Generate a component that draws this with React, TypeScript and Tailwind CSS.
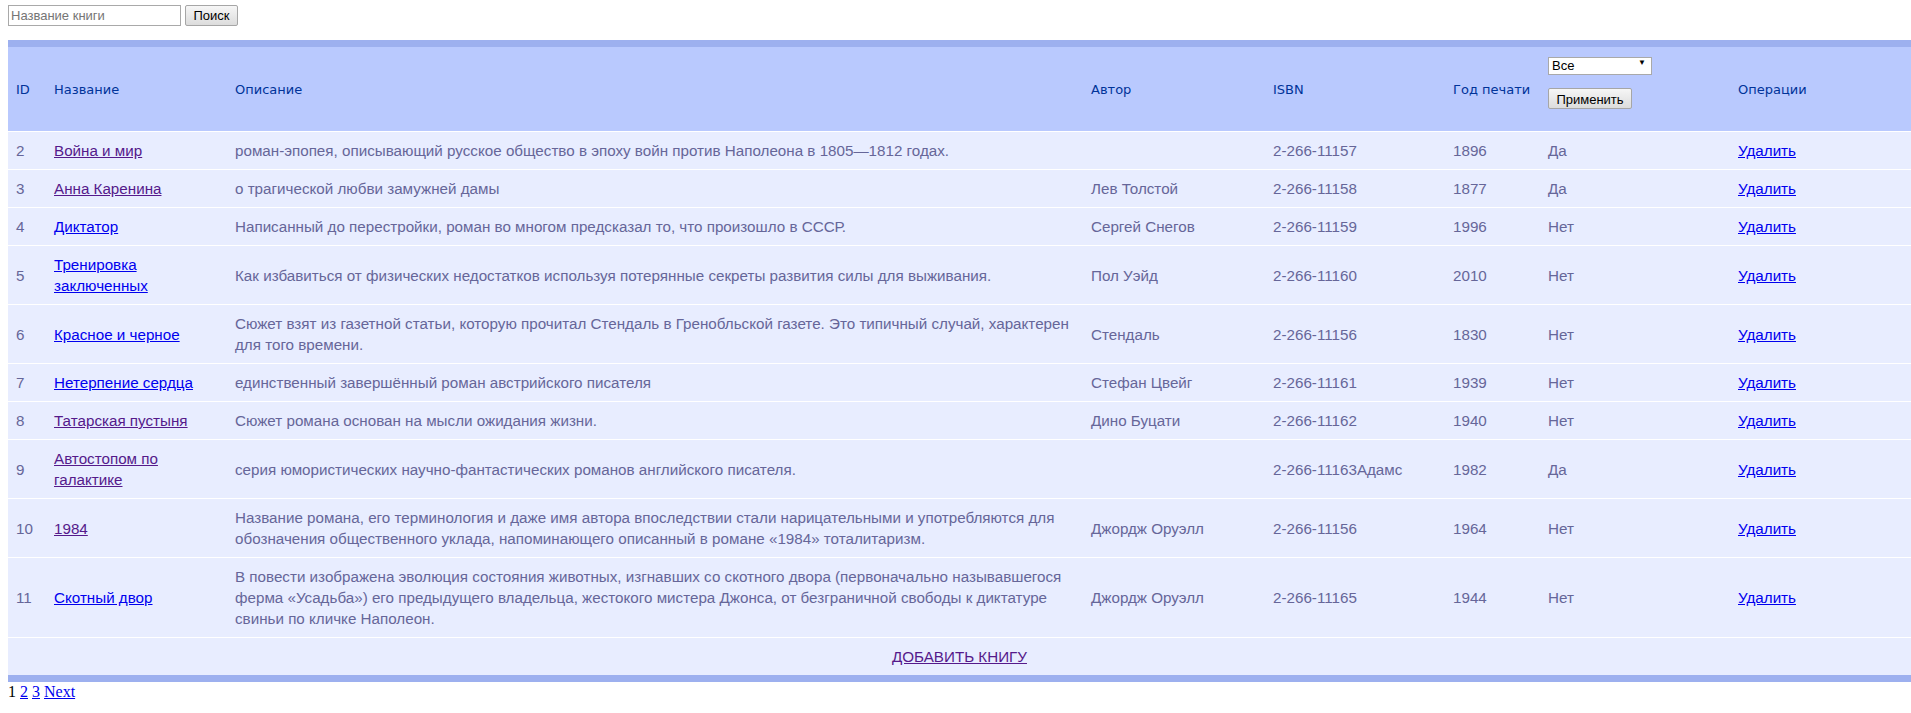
import React from "react";

type Book = {
  id: number;
  title: string;
  visited: boolean;
  description: string;
  author: string;
  isbn: string;
  year: string;
  read: string;
};

const books: Book[] = [
  {
    id: 2,
    title: "Война и мир",
    visited: true,
    description:
      "роман-эпопея, описывающий русское общество в эпоху войн против Наполеона в 1805—1812 годах.",
    author: "",
    isbn: "2-266-11157",
    year: "1896",
    read: "Да",
  },
  {
    id: 3,
    title: "Анна Каренина",
    visited: true,
    description: "о трагической любви замужней дамы",
    author: "Лев Толстой",
    isbn: "2-266-11158",
    year: "1877",
    read: "Да",
  },
  {
    id: 4,
    title: "Диктатор",
    visited: false,
    description:
      "Написанный до перестройки, роман во многом предсказал то, что произошло в СССР.",
    author: "Сергей Снегов",
    isbn: "2-266-11159",
    year: "1996",
    read: "Нет",
  },
  {
    id: 5,
    title: "Тренировка заключенных",
    visited: false,
    description:
      "Как избавиться от физических недостатков используя потерянные секреты развития силы для выживания.",
    author: "Пол Уэйд",
    isbn: "2-266-11160",
    year: "2010",
    read: "Нет",
  },
  {
    id: 6,
    title: "Красное и черное",
    visited: false,
    description:
      "Сюжет взят из газетной статьи, которую прочитал Стендаль в Гренобльской газете. Это типичный случай, характерен для того времени.",
    author: "Стендаль",
    isbn: "2-266-11156",
    year: "1830",
    read: "Нет",
  },
  {
    id: 7,
    title: "Нетерпение сердца",
    visited: false,
    description: "единственный завершённый роман австрийского писателя",
    author: "Стефан Цвейг",
    isbn: "2-266-11161",
    year: "1939",
    read: "Нет",
  },
  {
    id: 8,
    title: "Татарская пустыня",
    visited: true,
    description: "Сюжет романа основан на мысли ожидания жизни.",
    author: "Дино Буцати",
    isbn: "2-266-11162",
    year: "1940",
    read: "Нет",
  },
  {
    id: 9,
    title: "Автостопом по галактике",
    visited: true,
    description:
      "серия юмористических научно-фантастических романов английского писателя.",
    author: "",
    isbn: "2-266-11163Адамс",
    year: "1982",
    read: "Да",
  },
  {
    id: 10,
    title: "1984",
    visited: true,
    description:
      "Название романа, его терминология и даже имя автора впоследствии стали нарицательными и употребляются для обозначения общественного уклада, напоминающего описанный в романе «1984» тоталитаризм.",
    author: "Джордж Оруэлл",
    isbn: "2-266-11156",
    year: "1964",
    read: "Нет",
  },
  {
    id: 11,
    title: "Скотный двор",
    visited: false,
    description:
      "В повести изображена эволюция состояния животных, изгнавших со скотного двора (первоначально называвшегося ферма «Усадьба») его предыдущего владельца, жестокого мистера Джонса, от безграничной свободы к диктатуре свиньи по кличке Наполеон.",
    author: "Джордж Оруэлл",
    isbn: "2-266-11165",
    year: "1944",
    read: "Нет",
  },
];

const td =
  "px-2 py-[8px] border-b border-b-white align-middle text-[#666699]";
const th =
  "px-2 py-2 border-t-[7px] border-t-[#9db0ef] border-b border-b-white bg-[#b9c9fe] text-left font-normal text-[#003399] text-[13px] align-middle";

export default function App() {
  return (
    <div className="min-h-screen bg-white">
      <form className="flex items-center gap-1 pl-2 pt-[5px]">
        <input
          type="text"
          placeholder="Название книги"
          className="h-[21px] w-[173px] border border-[#a9a9a9] bg-white px-[2px] text-[13px] font-['Liberation_Sans',Arial,sans-serif] text-black placeholder:text-[#757575] outline-none"
        />
        <button
          type="button"
          className="h-[21px] w-[53px] rounded-[2px] border border-[#a6a6a6] bg-gradient-to-b from-[#f6f6f6] to-[#dcdcdc] text-[13px] font-['Liberation_Sans',Arial,sans-serif] text-black"
        >
          Поиск
        </button>
      </form>

      <table className="ml-2 mt-[14px] w-[1903px] table-fixed border-collapse border-b-[7px] border-b-[#9db0ef] text-left font-['Liberation_Sans',Arial,sans-serif] text-[15.2px] leading-[21px]">
        <colgroup>
          <col className="w-[38px]" />
          <col className="w-[181px]" />
          <col className="w-[856px]" />
          <col className="w-[182px]" />
          <col className="w-[180px]" />
          <col className="w-[95px]" />
          <col className="w-[190px]" />
          <col className="w-[181px]" />
        </colgroup>
        <thead className="font-['DejaVu_Sans',Verdana,sans-serif]">
          <tr>
            <th className={th}>ID</th>
            <th className={th}>Название</th>
            <th className={th}>Описание</th>
            <th className={th}>Автор</th>
            <th className={th}>ISBN</th>
            <th className={th}>Год печати</th>
            <th className={th}>
              <div className="flex flex-col items-start pb-[14px] font-['Liberation_Sans',Arial,sans-serif]">
                <div className="relative h-[18px] w-[104px]">
                  <select className="h-[18px] w-[104px] appearance-none border border-[#a9a9a9] bg-white pl-[3px] text-[13px] leading-[16px] text-black outline-none">
                    <option>Все</option>
                    <option>Да</option>
                    <option>Нет</option>
                  </select>
                  <span className="pointer-events-none absolute right-[6px] top-[4px] text-[8px] leading-[8px] text-black">
                    ▼
                  </span>
                </div>
                <button
                  type="button"
                  className="mt-[15px] h-[21px] w-[84px] rounded-[2px] border border-[#a6a6a6] bg-gradient-to-b from-[#f6f6f6] to-[#dcdcdc] text-[13px] text-black"
                >
                  Применить
                </button>
              </div>
            </th>
            <th className={th}>Операции</th>
          </tr>
        </thead>
        <tbody className="bg-[#e8edff]">
          {books.map((b) => (
            <tr key={b.id}>
              <td className={td}>{b.id}</td>
              <td className={td}>
                <a
                  href="#"
                  className={
                    b.visited
                      ? "text-[#551a8b] underline"
                      : "text-[#0000ee] underline"
                  }
                >
                  {b.title}
                </a>
              </td>
              <td className={td}>{b.description}</td>
              <td className={td}>{b.author}</td>
              <td className={td}>{b.isbn}</td>
              <td className={td}>{b.year}</td>
              <td className={td}>{b.read}</td>
              <td className={td}>
                <a href="#" className="text-[#0000ee] underline">
                  Удалить
                </a>
              </td>
            </tr>
          ))}
          <tr>
            <td colSpan={8} className={td + " text-center"}>
              <a href="#" className="text-[#551a8b] underline">
                ДОБАВИТЬ КНИГУ
              </a>
            </td>
          </tr>
        </tbody>
      </table>

      <div className="mt-[1px] pl-2 font-['Liberation_Serif','Times_New_Roman',serif] text-[16px] leading-[18px] text-black">
        1{" "}
        <a href="#" className="text-[#0000ee] underline">
          2
        </a>{" "}
        <a href="#" className="text-[#0000ee] underline">
          3
        </a>{" "}
        <a href="#" className="text-[#0000ee] underline">
          Next
        </a>
      </div>
    </div>
  );
}
